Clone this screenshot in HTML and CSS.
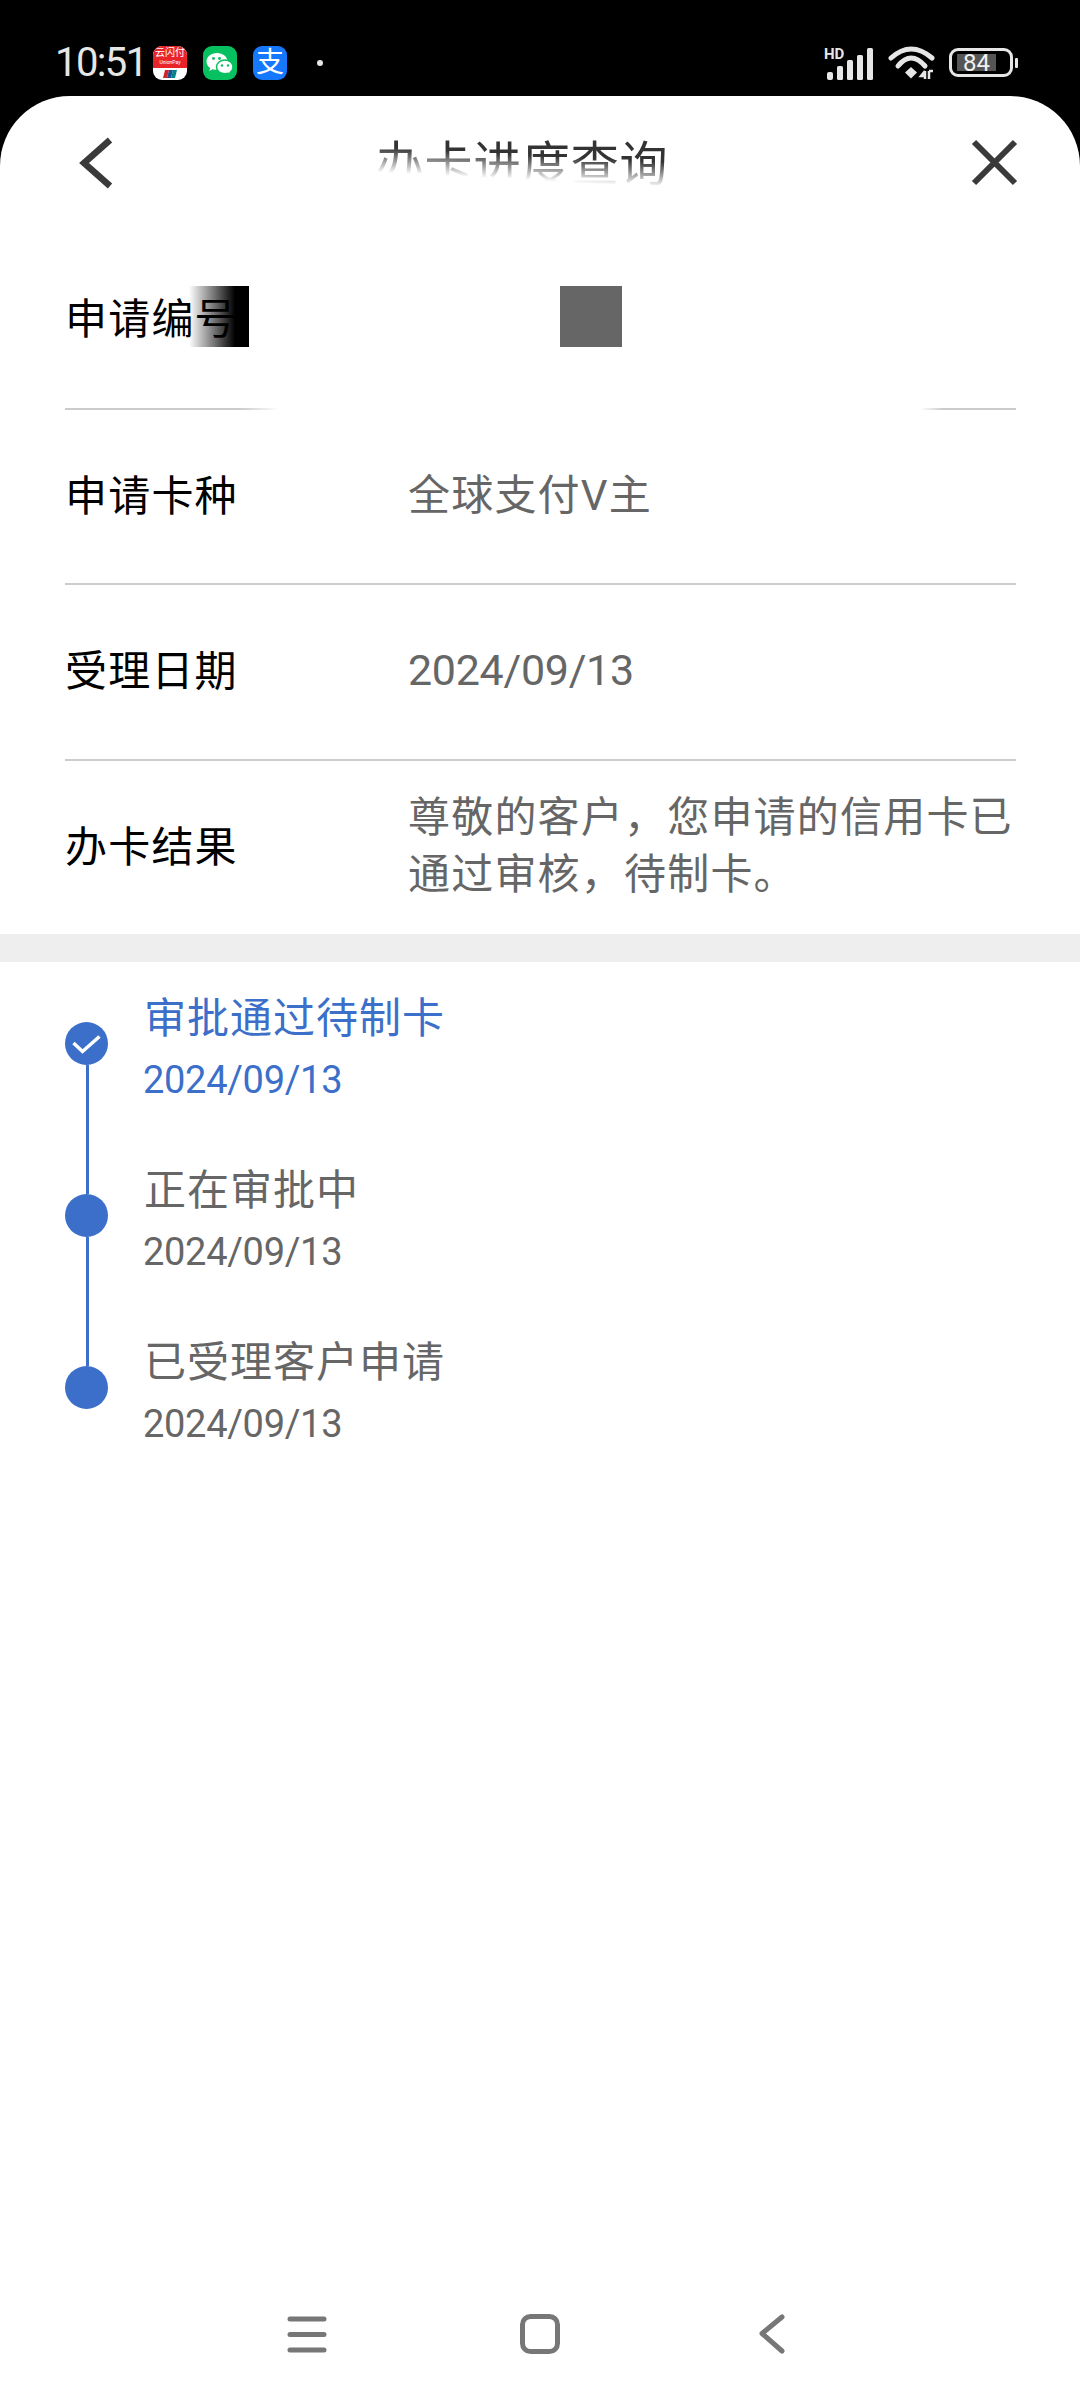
FILE: index.html
```html
<!DOCTYPE html>
<html lang="zh">
<head>
    <meta charset="UTF-8">
    <meta name="viewport" content="width=device-width, initial-scale=1.0">
    <title>办卡进度查询</title>
    <link rel="stylesheet" href="styles.css">
</head>
<body>
<div class="status-bar">
    <span class="time">10:51</span>
    <div class="app-icon unionpay">
        <div class="up-top"><span class="up-name">云闪付</span><span class="up-latin">UnionPay</span></div>
        <div class="up-bottom"><svg width="14" height="8" viewBox="0 0 14 8"><path d="M2 0h4L4 8H0z" fill="#d3222a"/><path d="M6 0h4L8 8H4z" fill="#1d4f91"/><path d="M10 0h4l-2 8H8z" fill="#00838a"/></svg></div>
    </div>
    <div class="app-icon wechat">
        <svg width="34" height="34" viewBox="0 0 34 34">
            <path d="M14 7c-6 0-10.500 3.800-10.500 8.500 0 2.700 1.400 5 3.700 6.600l-.9 2.900 3.300-1.700c1.300.4 2.800.7 4.400.7 6 0 10.500-3.800 10.500-8.500S20 7 14 7z" fill="#fff"/>
            <path d="M22 14c-4.800 0-8.500 3-8.500 6.900s3.700 6.900 8.500 6.900c1.100 0 2.200-.2 3.200-.5l2.600 1.400-.7-2.300c1.800-1.300 2.900-3.200 2.900-5.500 0-3.900-3.700-6.900-8-6.900z" fill="#fff" stroke="#07c160" stroke-width="1.500"/>
            <circle cx="10.500" cy="12.500" r="1.400" fill="#07c160"/>
            <circle cx="16.500" cy="12.500" r="1.400" fill="#07c160"/>
            <circle cx="19" cy="19.500" r="1.200" fill="#07c160"/>
            <circle cx="25" cy="19.500" r="1.200" fill="#07c160"/>
        </svg>
    </div>
    <div class="app-icon alipay">支</div>
    <span class="status-dot"></span>
    <div class="status-right">
        <div class="signal">
            <span class="hd">HD</span>
            <svg width="48" height="32" viewBox="0 0 48 32" fill="#e6e6e6">
                <rect x="0" y="24" width="6" height="8" rx="2"/>
                <rect x="10" y="18" width="6" height="14" rx="1.500"/>
                <rect x="20" y="12" width="6" height="20" rx="1.500"/>
                <rect x="30" y="7" width="6" height="25" rx="1.500"/>
                <rect x="40" y="0" width="6" height="32" rx="1.500"/>
            </svg>
        </div>
        <svg class="wifi" width="48" height="34" viewBox="0 0 48 34" fill="none" stroke="#e6e6e6" stroke-width="5" stroke-linecap="round">
            <path d="M3 12Q23 -6 44 12"/>
            <path d="M10 20Q23 4 37 20"/>
            <path d="M17 26.500l6-5.500 6 5.500-6 6z" fill="#e6e6e6" stroke="none"/>
            <path d="M37 25v8M37 25l-4 5h4M41 33v-8M41 25h4" stroke-width="2.500" stroke-linecap="butt"/>
        </svg>
        <div class="battery">
            <div class="battery-body"><span class="battery-level">84</span></div>
            <span class="battery-nub"></span>
        </div>
    </div>
</div>

<div class="sheet">
    <div class="header">
        <svg width="44" height="60" viewBox="0 0 44 60" fill="none" stroke="#3a3a3a" stroke-width="6.500">
            <path d="M34 7L8 30l26 23"/>
        </svg>
        <h1 class="title">办卡进度查询</h1>
        <svg width="52" height="52" viewBox="0 0 52 52" fill="none" stroke="#3a3a3a" stroke-width="6">
            <path d="M6 5l41 41M47 5L6 46"/>
        </svg>
    </div>

    <div class="info">
        <div class="row">
            <div class="label label-masked">申请编号</div>
            <div class="value"><div class="redact"></div></div>
        </div>
        <div class="divider divider-faded"></div>
        <div class="row">
            <div class="label">申请卡种</div>
            <div class="value">全球支付V主</div>
        </div>
        <div class="divider"></div>
        <div class="row">
            <div class="label">受理日期</div>
            <div class="value value-date">2024/09/13</div>
        </div>
        <div class="divider"></div>
        <div class="row">
            <div class="label">办卡结果</div>
            <div class="value">尊敬的客户，您申请的信用卡已通过审核，待制卡。</div>
        </div>
    </div>

    <div class="band"></div>

    <div class="timeline">
        <div class="step step-active">
            <div class="track">
                <div class="dot">
                    <svg width="43" height="43" viewBox="0 0 43 43" fill="none" stroke="#fff" stroke-width="3.500"><path d="M8.500 21l9 8.500 17-15"/></svg>
                </div>
                <div class="line"></div>
            </div>
            <div class="step-text">
                <div class="step-title">审批通过待制卡</div>
                <div class="step-date">2024/09/13</div>
            </div>
        </div>
        <div class="step">
            <div class="track">
                <div class="dot"></div>
                <div class="line"></div>
            </div>
            <div class="step-text">
                <div class="step-title">正在审批中</div>
                <div class="step-date">2024/09/13</div>
            </div>
        </div>
        <div class="step">
            <div class="track">
                <div class="dot"></div>
            </div>
            <div class="step-text">
                <div class="step-title">已受理客户申请</div>
                <div class="step-date">2024/09/13</div>
            </div>
        </div>
    </div>

    <div class="nav">
        <svg width="40" height="44" viewBox="0 0 40 44" fill="none" stroke="#777" stroke-width="5" stroke-linecap="round">
            <path d="M3 7h34M3 22.500h34M3 38h34"/>
        </svg>
        <svg width="40" height="44" viewBox="0 0 40 44" fill="none" stroke="#777" stroke-width="5">
            <rect x="2.500" y="4.500" width="35" height="35" rx="8"/>
        </svg>
        <svg width="40" height="44" viewBox="0 0 40 44" fill="none" stroke="#777" stroke-width="5" stroke-linecap="round" stroke-linejoin="round">
            <path d="M28 5L8 21.500 28 39"/>
        </svg>
    </div>
</div>
</body>
</html>
```

FILE: styles.css
```css
body {
    margin: 0;
    width: 1080px;
    height: 2400px;
    display: flex;
    flex-direction: column;
    background-color: #000;
    font-family: Roboto, "Noto Sans CJK SC", sans-serif;
    overflow: hidden;
}

/* status bar */
.status-bar {
    height: 96px;
    flex: none;
    display: flex;
    align-items: flex-start;
    padding: 46px 62px 0 55px;
    box-sizing: border-box;
    color: #e6e6e6;
}
.time {
    width: 98px;
    font-size: 40px;
    line-height: 34px;
    letter-spacing: -1.6px;
}
.app-icon {
    width: 34px;
    height: 34px;
    margin-right: 16px;
    border-radius: 9px;
    overflow: hidden;
    flex: none;
}
.unionpay {
    display: flex;
    flex-direction: column;
    background-color: #fff;
}
.up-top {
    height: 22px;
    display: flex;
    flex-direction: column;
    align-items: center;
    background-color: #e8242a;
    color: #fff;
}
.up-name {
    font-size: 10px;
    line-height: 13px;
}
.up-latin {
    font-size: 5px;
    line-height: 6px;
}
.up-bottom {
    flex: 1;
    display: flex;
    align-items: center;
    justify-content: center;
}
.wechat {
    background-color: #07c160;
}
.alipay {
    background-color: #1677ff;
    color: #fff;
    font-size: 28px;
    line-height: 33px;
    text-align: center;
}
.status-dot {
    width: 6px;
    height: 6px;
    margin: 14px 0 0 14px;
    border-radius: 50%;
    background-color: #e6e6e6;
}
.status-right {
    margin-left: auto;
    display: flex;
    align-items: flex-start;
}
.signal {
    width: 48px;
    height: 32px;
    margin: 2px 13px 0 0;
    display: flex;
    flex-direction: column;
}
.hd {
    height: 0;
    font-size: 15px;
    line-height: 12px;
    font-weight: 700;
    margin-left: -3px;
}
.wifi {
    margin-right: 13px;
}
.battery {
    display: flex;
    align-items: center;
    margin-top: 2px;
}
.battery-body {
    width: 64px;
    height: 29px;
    box-sizing: border-box;
    padding: 3px 14px 3px 5px;
    border: 3px solid #e6e6e6;
    border-radius: 9px;
}
.battery-level {
    display: block;
    height: 17px;
    background-color: #555;
    color: #f0f0f0;
    font-size: 24px;
    line-height: 18px;
    text-align: center;
}
.battery-nub {
    width: 3px;
    height: 10px;
    margin-left: 2px;
    border-radius: 1px;
    background-color: #e6e6e6;
}

/* white sheet */
.sheet {
    flex: 1;
    display: flex;
    flex-direction: column;
    background-color: #fff;
    border-radius: 70px 70px 0 0;
}
.header {
    height: 138px;
    flex: none;
    display: flex;
    align-items: center;
    justify-content: space-between;
    padding: 0 60px 4px 76px;
    box-sizing: border-box;
}
.title {
    margin: 4px 44px 0 0;
    font-size: 48px;
    line-height: 60px;
    letter-spacing: 0.8px;
    font-weight: 400;
    color: #333;
    -webkit-mask-image: linear-gradient(183deg, #000 36%, transparent 70%);
    mask-image: linear-gradient(183deg, #000 36%, transparent 70%);
}

/* info rows */
.info {
    padding: 0 64px 0 65px;
}
.row {
    height: 173.5px;
    display: grid;
    grid-template-columns: 343px 1fr;
    align-items: center;
    font-size: 42px;
    letter-spacing: 1.2px;
}
.label {
    color: #000;
    margin-bottom: 8px;
}
.label-masked {
    width: 184px;
    height: 61px;
    line-height: 67px;
    background-image: linear-gradient(90deg, transparent 124px, #000 170px);
}
.value {
    color: #666;
    line-height: 57px;
    margin-bottom: 2px;
}
.value-date {
    font-size: 43px;
    letter-spacing: -0.3px;
}
.redact {
    width: 62px;
    height: 61px;
    margin: 0 0 6px 152px;
    background-color: #666;
}
.divider {
    height: 2px;
    background-color: #ccc;
}
.divider-faded {
    background: linear-gradient(90deg, #ccc 176px, transparent 214px, transparent 855px, #ccc 878px);
}
.band {
    height: 28px;
    flex: none;
    background-color: #eee;
}

/* timeline */
.timeline {
    padding: 60px 0 0 65px;
}
.step {
    height: 172px;
    display: flex;
    color: #666;
}
.step-active {
    color: #3b6fc9;
}
.track {
    width: 43px;
    margin-right: 36px;
    display: flex;
    flex-direction: column;
    align-items: center;
}
.dot {
    width: 43px;
    height: 43px;
    flex: none;
    border-radius: 50%;
    background-color: #3b6fc9;
}
.dot svg {
    display: block;
}
.line {
    width: 3px;
    flex: 1;
    margin-left: 1px;
    background-color: #3b6fc9;
}
.step-text {
    margin-top: -31px;
}
.step-title {
    font-size: 42px;
    line-height: 56px;
    letter-spacing: 1px;
}
.step-date {
    margin: 8px 0 0 -1px;
    font-size: 38px;
    line-height: 50px;
    letter-spacing: -0.3px;
}

/* bottom nav */
.nav {
    margin-top: auto;
    display: flex;
    justify-content: center;
    gap: 193.5px;
    padding-bottom: 44px;
}
```
